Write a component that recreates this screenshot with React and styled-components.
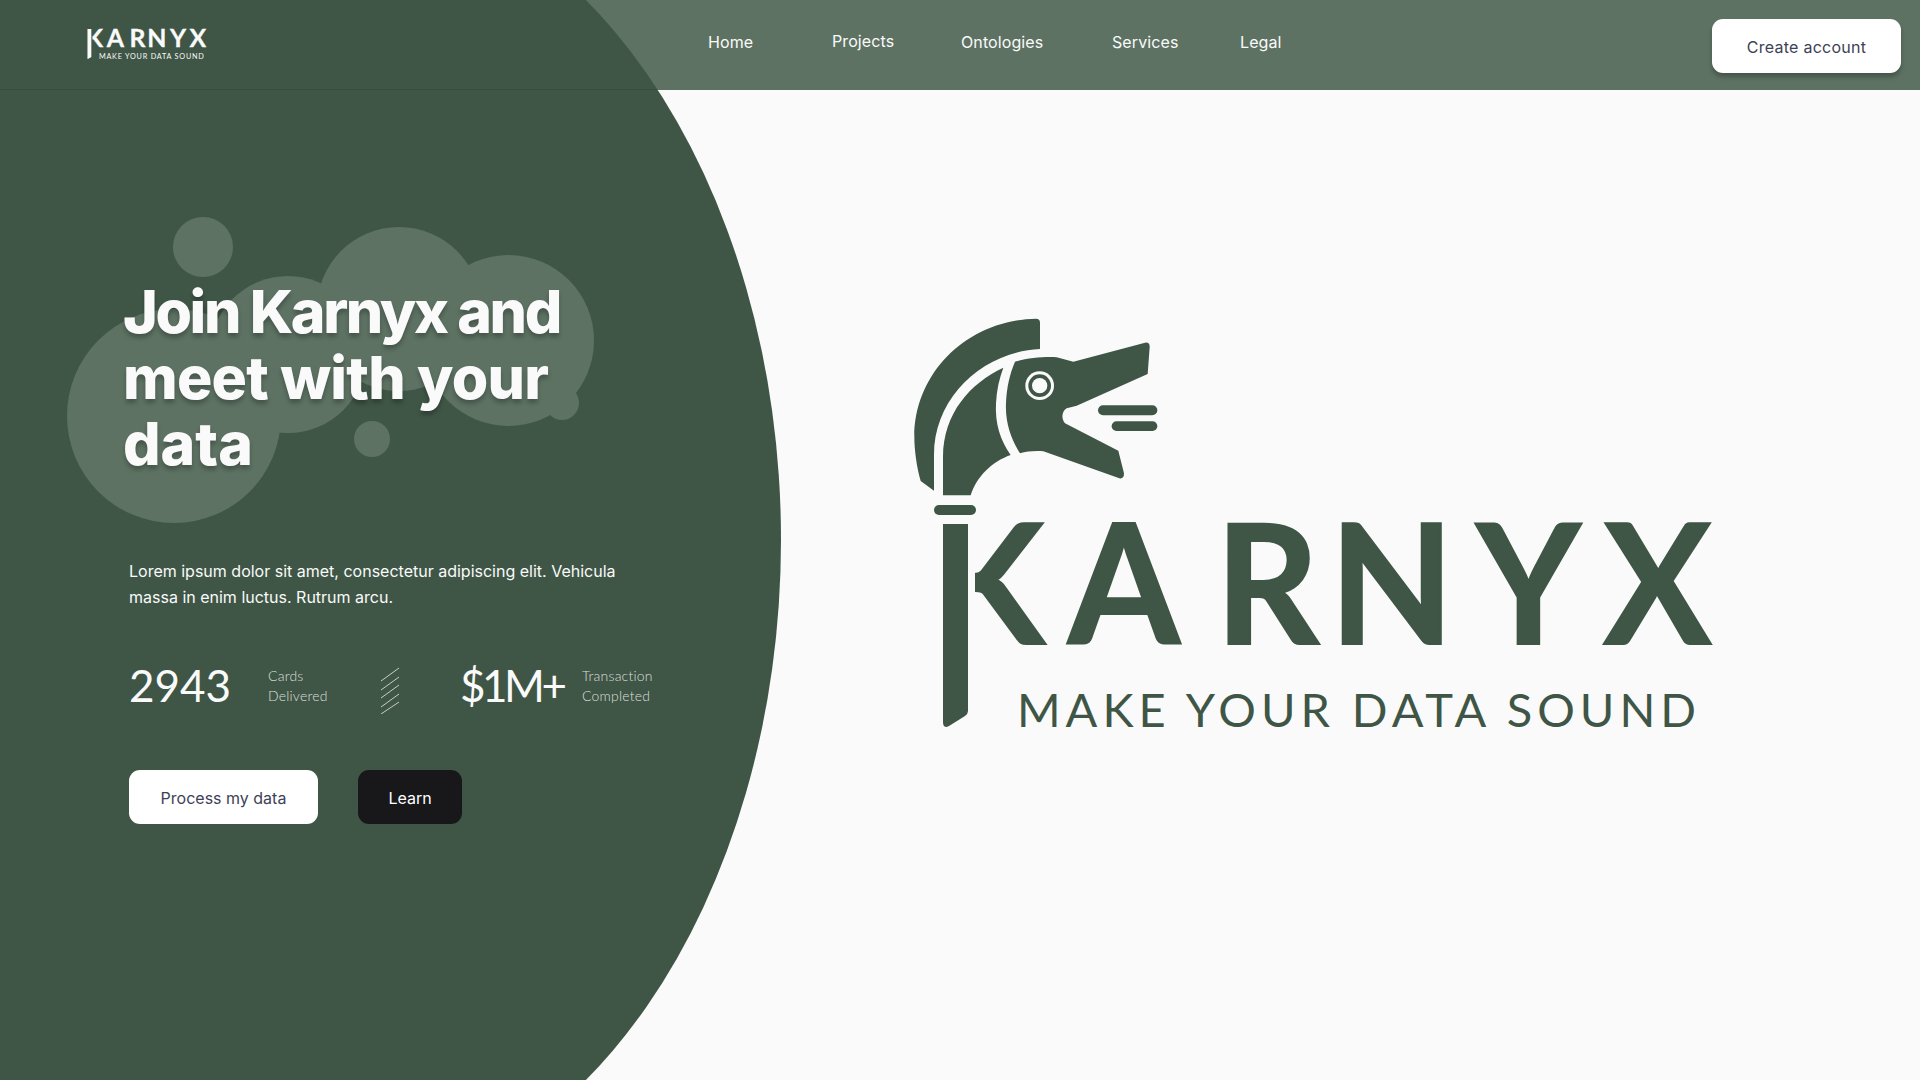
import React from "react";
import styled, { createGlobalStyle } from "styled-components";

const DARK = "#3F5646";
const MID = "#5D7263";
const PAPER = "#FAFAFA";

const Global = createGlobalStyle`
  html, body { margin: 0; padding: 0; background: ${PAPER}; }
  body { font-family: "Inter", "Liberation Sans", sans-serif; overflow: hidden; }
  * { box-sizing: border-box; }
`;

const Page = styled.div`
  position: relative;
  width: 1920px;
  height: 1080px;
  overflow: hidden;
  background: ${PAPER};
`;

const BigCircle = styled.div`
  position: absolute;
  left: 0;
  top: -120px;
  width: 781px;
  height: 1320px;
  border-radius: 0 459px 459px 0 / 0 660px 660px 0;
  background: ${DARK};
  z-index: 1;
`;

const Header = styled.header`
  height: 90px;
  background: ${MID};
`;

const HeaderInner = styled.div`
  position: relative;
  z-index: 2;
  height: 90px;
  display: flex;
  align-items: flex-start;
  padding: 0 19px 0 87px;
`;

const HeaderRule = styled.div`
  position: absolute;
  left: 0;
  top: 89px;
  width: 657px;
  height: 1px;
  background: #384d3c;
`;

const SmallMark = styled.svg`
  display: block;
  width: 119px;
  height: 30px;
  margin-top: 29px;
  flex: none;
  overflow: visible;
`;

const Nav = styled.nav`
  display: flex;
  margin-left: 502px;
  margin-top: 31px;
`;

const NavLink = styled.a`
  width: ${(p) => p.$w}px;
  font-size: 16px;
  line-height: 22px;
  letter-spacing: 0.1px;
  color: #fafafa;
  transform: translateY(${(p) => p.$lift || 0}px);
`;

const Button = styled.button`
  height: 54px;
  width: ${(p) => p.$w}px;
  border: 0;
  border-radius: 11px;
  font-family: inherit;
  font-size: 16px;
  font-weight: 400;
  padding: 2px 0 0;
  color: ${(p) => (p.$dark ? "#fff" : "#3d4256")};
  background: ${(p) => (p.$dark ? "#18181B" : "#fff")};
  box-shadow: ${(p) => (p.$shadow ? "0 4px 4px rgba(0,0,0,.25)" : "none")};
`;

const CreateButton = styled(Button)`
  margin-left: auto;
  margin-top: 19px;
  letter-spacing: 0.25px;
`;

const Main = styled.main`
  position: relative;
  z-index: 2;
  display: flex;
  align-items: flex-start;
`;

const Left = styled.section`
  width: 780px;
  flex: none;
  padding: 0 0 0 129px;
`;

const HeadingWrap = styled.div`
  position: relative;
  margin: 189px 0 0 -6px;
`;

const Blob = styled.svg`
  position: absolute;
  left: -123px;
  top: -279px;
  width: 700px;
  height: 540px;
`;

const Heading = styled.h1`
  position: relative;
  margin: 0;
  font-size: 59px;
  line-height: 66px;
  font-weight: 800;
  color: #fafafa;
  text-shadow: 0 4px 4px rgba(0, 0, 0, 0.25);
`;

const HeadingLine = styled.span`
  display: block;
  letter-spacing: ${(p) => p.$track}em;
  white-space: nowrap;
`;

const Lede = styled.p`
  margin: 81px 0 0;
  width: 500px;
  font-size: 16px;
  line-height: 26px;
  color: #fafafa;
`;

const Stats = styled.div`
  display: flex;
  align-items: center;
  margin-top: 50px;
  height: 50px;
`;

const StatValue = styled.div`
  font-family: "Lato", sans-serif;
  font-weight: 400;
  font-size: 44px;
  line-height: 50px;
  letter-spacing: ${(p) => p.$track || 0}px;
  color: #fafafa;
  width: ${(p) => p.$w}px;
  flex: none;
`;

const StatLabel = styled.div`
  font-family: "Lato", sans-serif;
  font-weight: 300;
  font-size: 14px;
  line-height: 20px;
  letter-spacing: 0.2px;
  margin-top: 2px;
  color: rgba(255, 255, 255, 0.82);
  width: ${(p) => p.$w}px;
  flex: none;
`;

const Hatch = styled.svg`
  width: 20px;
  height: 47px;
  flex: none;
  margin: 10px 60px 0 0;
`;

const Actions = styled.div`
  display: flex;
  gap: 40px;
  margin-top: 60px;
`;

const BigMark = styled.svg`
  display: block;
  width: 820px;
  height: 430px;
  margin: 220px 0 0 120px;
  flex: none;
`;

const LETTER_X = "963 1101 1253 1371 1522 1653";

function Wordmark({ fill, ground }) {
  return (
    <g fill={fill}>
      <text
        x={LETTER_X}
        y="644"
        transform="scale(0.97 1)"
        stroke={fill}
        strokeWidth="2"
        fontFamily="Lato, sans-serif"
        fontWeight="700"
        fontSize="166"
      >
        KARNYX
      </text>
      <rect x="930" y="515" width="45" height="140" fill={ground} />
      <path d="M943 524H968V711Q968 714 965 716L949 726Q943 729 943 722Z" />
      <text
        x="1017"
        y="727"
        fontFamily="Lato, sans-serif"
        fontWeight="400"
        fontSize="47"
        textLength="679"
        lengthAdjust="spacing"
      >
        MAKE YOUR DATA SOUND
      </text>
    </g>
  );
}

function Bird({ fill, ground }) {
  return (
    <g transform="translate(880 300) scale(0.33333)" fill={fill}>
      <path d="M480 147V68Q480 56 468 56C260 60 103 220 103 410C103 450 110 500 122 543L162 572V465C162 290 310 155 480 147Z" />
      <path d="M370 203C270 250 190 340 189 470V586H272C290 530 335 485 392 465C360 420 345 370 348 310C350 270 358 235 370 203Z" />
      <path d="M405 185C450 172 500 170 530 172L580 185L795 128Q810 126 809 142L803 222L590 317Q570 322 560 325C545 335 543 355 555 370L715 452L732 520Q732 538 718 535L490 454C465 452 440 454 420 460C395 420 375 370 378 310C380 260 390 220 405 185Z" />
      <circle cx="479" cy="257" r="43" fill={ground} />
      <circle cx="479" cy="257" r="34" />
      <circle cx="479" cy="257" r="23" fill={ground} />
      <rect x="654" y="316" width="178" height="30" rx="15" />
      <rect x="695" y="364" width="137" height="29" rx="14.5" />
      <rect x="162" y="615" width="126" height="30" rx="15" />
    </g>
  );
}

export default function App() {
  return (
    <Page>
      <Global />
      <BigCircle />
      <Header>
        <HeaderInner>
          <HeaderRule />
          <SmallMark viewBox="940 524 770 203" preserveAspectRatio="none" aria-label="Karnyx">
            <Wordmark fill="#fafafa" ground={DARK} />
          </SmallMark>
          <Nav>
            <NavLink $w={124}>Home</NavLink>
            <NavLink $w={129} $lift={-1}>Projects</NavLink>
            <NavLink $w={151}>Ontologies</NavLink>
            <NavLink $w={128}>Services</NavLink>
            <NavLink $w={50}>Legal</NavLink>
          </Nav>
          <CreateButton $w={189} $shadow>Create account</CreateButton>
        </HeaderInner>
      </Header>
      <Main>
        <Left>
          <HeadingWrap>
            <Blob viewBox="0 0 700 540" fill={MID}>
              <circle cx="174" cy="416" r="107" />
              <circle cx="288" cy="354.5" r="78.5" />
              <circle cx="399" cy="309" r="82" />
              <circle cx="508.5" cy="340.5" r="85.5" />
              <circle cx="203" cy="247" r="30" />
              <circle cx="562" cy="403" r="17" />
              <circle cx="372" cy="439" r="18" />
            </Blob>
            <Heading>
              <HeadingLine $track={-0.04}>Join Karnyx and</HeadingLine>
              <HeadingLine $track={-0.013}>meet with your</HeadingLine>
              <HeadingLine $track={0}>data</HeadingLine>
            </Heading>
          </HeadingWrap>
          <Lede>Lorem ipsum dolor sit amet, consectetur adipiscing elit. Vehicula massa in enim luctus. Rutrum arcu.</Lede>
          <Stats>
            <StatValue $w={139}>2943</StatValue>
            <StatLabel $w={112}>Cards<br />Delivered</StatLabel>
            <Hatch viewBox="0 0 20 47" fill="none" stroke="rgba(255,255,255,.7)" strokeWidth="1">
              <path d="M1 14L19 1M1 23L19 10M1 31L19 18M1 40L19 27M1 47L19 35" />
            </Hatch>
            <StatValue $w={122} $track={-3.5}>$1M+</StatValue>
            <StatLabel $w={90}>Transaction<br />Completed</StatLabel>
          </Stats>
          <Actions>
            <Button $w={189}>Process my data</Button>
            <Button $w={104} $dark>Learn</Button>
          </Actions>
        </Left>
        <BigMark viewBox="900 310 820 430" aria-label="Karnyx, make your data sound">
          <Bird fill={DARK} ground={PAPER} />
          <Wordmark fill={DARK} ground={PAPER} />
        </BigMark>
      </Main>
    </Page>
  );
}
